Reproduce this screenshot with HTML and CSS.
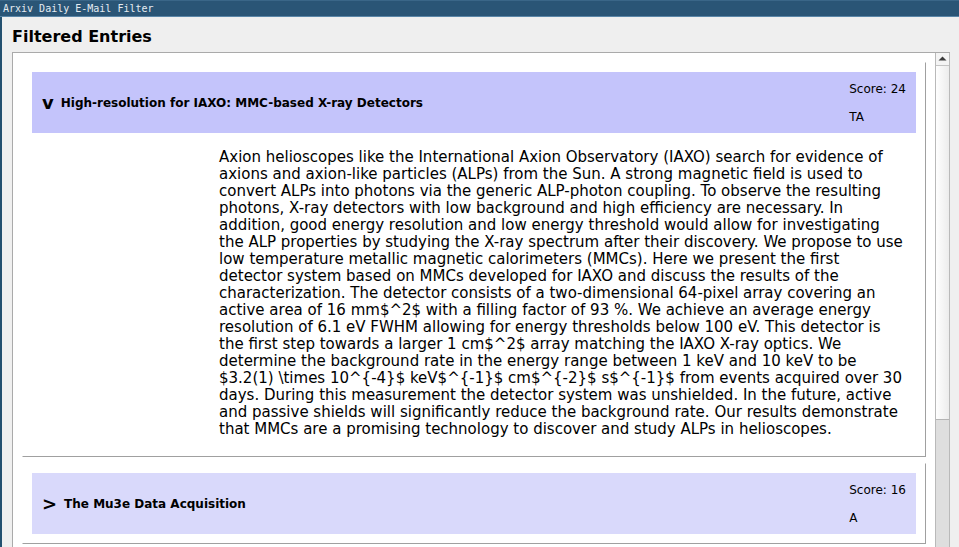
FILE: index.html
```html
<!DOCTYPE html>
<html>
<head>
<meta charset="utf-8">
<link rel="stylesheet" href="styles.css">
</head>
<body>
<div class="titlebar">Arxiv Daily E-Mail Filter</div>
<div class="window">
  <h1 class="heading">Filtered Entries</h1>
  <div class="listframe">
    <div class="canvas">
      <div class="entry">
        <div class="entry-header top">
          <span class="arrow">v</span>
          <span class="entry-title">High-resolution for IAXO: MMC-based X-ray Detectors</span>
          <div class="meta"><div class="meta-line">Score: 24</div><div class="meta-line">TA</div></div>
        </div>
        <p class="abstract">Axion helioscopes like the International Axion Observatory (IAXO) search for evidence of<br>axions and axion-like particles (ALPs) from the Sun. A strong magnetic field is used to<br>convert ALPs into photons via the generic ALP-photon coupling. To observe the resulting<br>photons, X-ray detectors with low background and high efficiency are necessary. In<br>addition, good energy resolution and low energy threshold would allow for investigating<br>the ALP properties by studying the X-ray spectrum after their discovery. We propose to use<br>low temperature metallic magnetic calorimeters (MMCs). Here we present the first<br>detector system based on MMCs developed for IAXO and discuss the results of the<br>characterization. The detector consists of a two-dimensional 64-pixel array covering an<br>active area of 16 mm$^2$ with a filling factor of 93 %. We achieve an average energy<br>resolution of 6.1 eV FWHM allowing for energy thresholds below 100 eV. This detector is<br>the first step towards a larger 1 cm$^2$ array matching the IAXO X-ray optics. We<br>determine the background rate in the energy range between 1 keV and 10 keV to be<br>$3.2(1) \times 10^{-4}$ keV$^{-1}$ cm$^{-2}$ s$^{-1}$ from events acquired over 30<br>days. During this measurement the detector system was unshielded. In the future, active<br>and passive shields will significantly reduce the background rate. Our results demonstrate<br>that MMCs are a promising technology to discover and study ALPs in helioscopes.</p>
      </div>
      <div class="entry">
        <div class="entry-header second">
          <span class="arrow">&gt;</span>
          <span class="entry-title">The Mu3e Data Acquisition</span>
          <div class="meta"><div class="meta-line">Score: 16</div><div class="meta-line">A</div></div>
        </div>
      </div>
    </div>
    <div class="scrollbar">
      <div class="sb-up"><svg width="9" height="5" viewBox="0 0 9 5"><polygon points="0.5,4.5 4.5,0.5 8.5,4.5" fill="#3a3a3a"/></svg></div>
      <div class="sb-thumb"></div>
      <div class="sb-trough"></div>
    </div>
  </div>
</div>
</body>
</html>
```
FILE: styles.css
```css
html, body {
  margin: 0;
  padding: 0;
  height: 547px;
  overflow: hidden;
  background: #efefef;
}
body {
  display: flex;
  flex-direction: column;
  font-family: "DejaVu Sans", sans-serif;
  color: #000;
}
.titlebar {
  height: 15px;
  background: #2a5576;
  border-top: 1px solid #3a6688;
  border-bottom: 1px solid #5a86a8;
  color: #e4ebf1;
  font-family: "DejaVu Sans Mono", monospace;
  font-size: 10px;
  line-height: 15px;
  padding-left: 3px;
  white-space: nowrap;
}
.window {
  flex: 1;
  display: flex;
  flex-direction: column;
  border-left: 2px solid #23506f;
  padding-left: 10px;
  min-height: 0;
}
.heading {
  margin: 10px 0 6px 0;
  font-size: 16px;
  line-height: 19px;
  font-weight: bold;
  color: #000;
}
.listframe {
  flex: 1;
  display: flex;
  margin-right: 9px;
  border-top: 1px solid #aaaaaa;
  border-left: 1px solid #aaaaaa;
  min-height: 0;
}
.canvas {
  flex: 1;
  background: #fff;
  padding: 9px 9px 0 9px;
  display: flex;
  flex-direction: column;
  gap: 6px;
  overflow: hidden;
}
.entry {
  border: 1px solid;
  border-color: #fff #a0a0a0 #a0a0a0 #fff;
  padding: 9px;
  flex-shrink: 0;
}
.entry-header {
  display: flex;
  align-items: center;
  height: 61px;
  padding: 0 10px;
  background: #c4c4fb;
}
.entry-header.second {
  background: #d9d9fb;
}
.arrow {
  font-size: 18px;
  font-weight: bold;
  line-height: 20px;
  margin-right: 7px;
}
.entry-title {
  flex: 1;
  font-size: 12px;
  font-weight: bold;
  white-space: nowrap;
}
.meta {
  display: flex;
  flex-direction: column;
  gap: 14px;
  font-size: 12px;
  line-height: 14px;
  align-self: flex-start;
  padding-top: 10px;
}
.meta-line {
  white-space: nowrap;
}
.abstract {
  margin: 16px 0 9px 0;
  padding-left: 187px;
  font-size: 15px;
  line-height: 17px;
  white-space: nowrap;
}
.scrollbar {
  width: 13px;
  display: flex;
  flex-direction: column;
  border-left: 1px solid #b9b9b9;
  border-right: 1px solid #b9b9b9;
  background: #dedede;
}
.sb-up {
  height: 13px;
  background: #f4f4f4;
  border-bottom: 1px solid #c4c4c4;
  display: flex;
  justify-content: center;
  padding-top: 3px;
  box-sizing: border-box;
}
.sb-thumb {
  height: 353px;
  background: linear-gradient(to right, #fefefe, #ececec);
  border-bottom: 1px solid #b4b4b4;
}
.sb-trough {
  flex: 1;
  background: #dedede;
}
```
